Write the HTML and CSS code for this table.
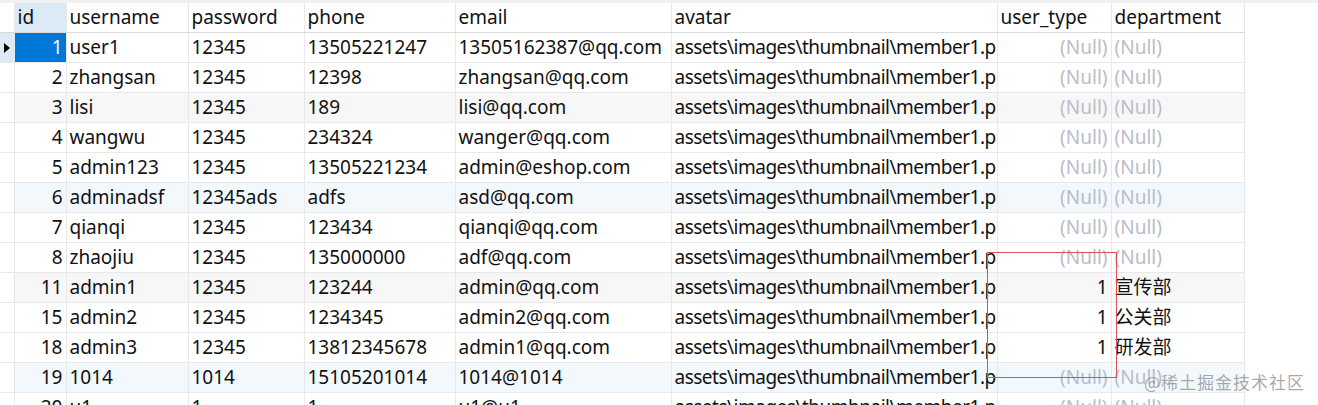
FILE: index.html
```html
<!DOCTYPE html>
<html lang="zh-CN">
<head>
	<meta charset="utf-8">
	<title>user</title>
	<link rel="stylesheet" href="styles.css">
</head>
<body>
	<div class="grid-wrap">
		<table class="grid">
			<colgroup>
				<col class="c-ind">
				<col class="c-id">
				<col class="c-user">
				<col class="c-pass">
				<col class="c-phone">
				<col class="c-email">
				<col class="c-avatar">
				<col class="c-type">
				<col class="c-dept">
			</colgroup>
			<thead>
				<tr>
					<th class="ind"></th>
					<th class="cur">id</th>
					<th>username</th>
					<th>password</th>
					<th>phone</th>
					<th>email</th>
					<th>avatar</th>
					<th>user_type</th>
					<th>department</th>
				</tr>
			</thead>
			<tbody>
				<tr>
					<td class="ind cur"><span class="arrow"></span></td>
					<td class="num sel">1</td>
					<td>user1</td>
					<td>12345</td>
					<td>13505221247</td>
					<td>13505162387@qq.com</td>
					<td class="path">assets\images\thumbnail\member1.png</td>
					<td class="num null">(Null)</td>
					<td class="null">(Null)</td>
				</tr>
				<tr>
					<td class="ind"></td>
					<td class="num">2</td>
					<td>zhangsan</td>
					<td>12345</td>
					<td>12398</td>
					<td>zhangsan@qq.com</td>
					<td class="path">assets\images\thumbnail\member1.png</td>
					<td class="num null">(Null)</td>
					<td class="null">(Null)</td>
				</tr>
				<tr class="gray">
					<td class="ind"></td>
					<td class="num">3</td>
					<td>lisi</td>
					<td>12345</td>
					<td>189</td>
					<td>lisi@qq.com</td>
					<td class="path">assets\images\thumbnail\member1.png</td>
					<td class="num null">(Null)</td>
					<td class="null">(Null)</td>
				</tr>
				<tr>
					<td class="ind"></td>
					<td class="num">4</td>
					<td>wangwu</td>
					<td>12345</td>
					<td>234324</td>
					<td>wanger@qq.com</td>
					<td class="path">assets\images\thumbnail\member1.png</td>
					<td class="num null">(Null)</td>
					<td class="null">(Null)</td>
				</tr>
				<tr>
					<td class="ind"></td>
					<td class="num">5</td>
					<td>admin123</td>
					<td>12345</td>
					<td>13505221234</td>
					<td>admin@eshop.com</td>
					<td class="path">assets\images\thumbnail\member1.png</td>
					<td class="num null">(Null)</td>
					<td class="null">(Null)</td>
				</tr>
				<tr class="blue">
					<td class="ind"></td>
					<td class="num">6</td>
					<td>adminadsf</td>
					<td>12345ads</td>
					<td>adfs</td>
					<td>asd@qq.com</td>
					<td class="path">assets\images\thumbnail\member1.png</td>
					<td class="num null">(Null)</td>
					<td class="null">(Null)</td>
				</tr>
				<tr>
					<td class="ind"></td>
					<td class="num">7</td>
					<td>qianqi</td>
					<td>12345</td>
					<td>123434</td>
					<td>qianqi@qq.com</td>
					<td class="path">assets\images\thumbnail\member1.png</td>
					<td class="num null">(Null)</td>
					<td class="null">(Null)</td>
				</tr>
				<tr>
					<td class="ind"></td>
					<td class="num">8</td>
					<td>zhaojiu</td>
					<td>12345</td>
					<td>135000000</td>
					<td>adf@qq.com</td>
					<td class="path">assets\images\thumbnail\member1.png</td>
					<td class="num null">(Null)</td>
					<td class="null">(Null)</td>
				</tr>
				<tr class="gray">
					<td class="ind"></td>
					<td class="num">11</td>
					<td>admin1</td>
					<td>12345</td>
					<td>123244</td>
					<td>admin@qq.com</td>
					<td class="path">assets\images\thumbnail\member1.png</td>
					<td class="num">1</td>
					<td>宣传部</td>
				</tr>
				<tr>
					<td class="ind"></td>
					<td class="num">15</td>
					<td>admin2</td>
					<td>12345</td>
					<td>1234345</td>
					<td>admin2@qq.com</td>
					<td class="path">assets\images\thumbnail\member1.png</td>
					<td class="num">1</td>
					<td>公关部</td>
				</tr>
				<tr>
					<td class="ind"></td>
					<td class="num">18</td>
					<td>admin3</td>
					<td>12345</td>
					<td>13812345678</td>
					<td>admin1@qq.com</td>
					<td class="path">assets\images\thumbnail\member1.png</td>
					<td class="num">1</td>
					<td>研发部</td>
				</tr>
				<tr class="blue">
					<td class="ind"></td>
					<td class="num">19</td>
					<td>1014</td>
					<td>1014</td>
					<td>15105201014</td>
					<td>1014@1014</td>
					<td class="path">assets\images\thumbnail\member1.png</td>
					<td class="num null">(Null)</td>
					<td class="null">(Null)</td>
				</tr>
				<tr>
					<td class="ind"></td>
					<td class="num">20</td>
					<td>u1</td>
					<td>1</td>
					<td>1</td>
					<td>u1@u1</td>
					<td class="path">assets\images\thumbnail\member1.png</td>
					<td class="num null">(Null)</td>
					<td class="null">(Null)</td>
				</tr>
			</tbody>
		</table>
		<div class="mark"></div>
		<div class="watermark">@稀土掘金技术社区</div>
	</div>
</body>
</html>
```

FILE: styles.css
```css
* {
	margin: 0;
	padding: 0;
	box-sizing: border-box;
}
html, body {
	height: 100%;
	overflow: hidden;
	background: #fff;
}
body {
	font-family: "Noto Sans", "Noto Sans CJK SC", sans-serif;
	font-size: 19px;
	color: #111;
	border-top: 3px solid #f0f0f0;
}
.grid-wrap {
	position: relative;
}
.grid {
	border-collapse: collapse;
	table-layout: fixed;
	width: 1244px;
}
.c-ind { width: 14px; }
.c-id { width: 52px; }
.c-user { width: 122px; }
.c-pass { width: 116px; }
.c-phone { width: 151px; }
.c-email { width: 216px; }
.c-avatar { width: 326px; }
.c-type { width: 114px; }
.c-dept { width: 133px; }

.grid th,
.grid td {
	height: 30px;
	padding: 0 3px;
	border: 1px solid #e8e8e8;
	border-top: none;
	border-left: none;
	white-space: nowrap;
	overflow: hidden;
	text-overflow: clip;
	font-weight: normal;
	text-align: left;
	line-height: 28px;
}
.grid thead th {
	height: 29px;
	border-bottom-color: #dadada;
}
.grid th.cur {
	background: #dce9f7;
}
.grid .ind {
	padding: 0;
	position: relative;
}
.arrow {
	position: absolute;
	left: 4px;
	top: 10px;
	border-left: 6px solid #000;
	border-top: 5px solid transparent;
	border-bottom: 5px solid transparent;
}
.grid .num {
	text-align: right;
}
.grid .path {
	letter-spacing: -0.5px;
}
.grid td.sel {
	background: #0078d7;
	color: #fff;
}
.grid .null {
	color: #b9bdca;
}
.grid tr.gray td {
	background: #f7f7f7;
}
.grid tr.blue td {
	background: #f3f8fd;
}
.grid tr td.ind,
.grid tr.gray td.ind,
.grid tr.blue td.ind {
	background: #fff;
}
.grid tr td.ind.cur {
	background: #dce9f7;
}

.mark {
	position: absolute;
	left: 987px;
	top: 249px;
	width: 130px;
	height: 126px;
	border: 1px solid #d9525a;
}
.watermark {
	position: absolute;
	left: 1144px;
	top: 366px;
	font-family: "Noto Sans CJK SC", sans-serif;
	font-size: 17px;
	color: rgba(140, 140, 140, 0.75);
	letter-spacing: 1px;
}
```
